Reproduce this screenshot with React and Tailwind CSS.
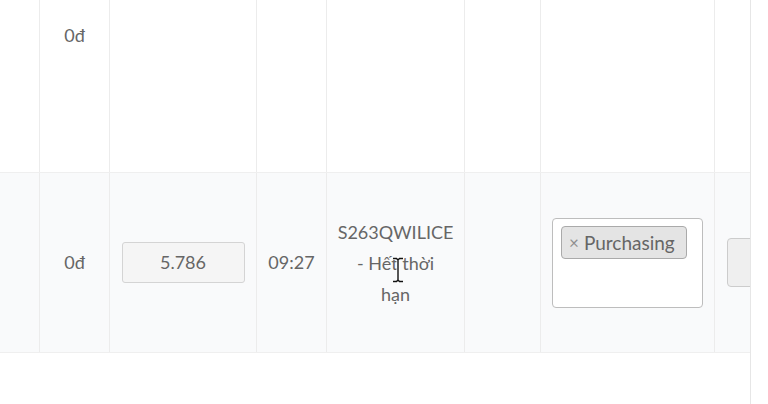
import React from 'react';

const cols = [
  'w-[40px]',
  'w-[70px]',
  'w-[147px]',
  'w-[70px]',
  'w-[138px]',
  'w-[76px]',
  'w-[174px]',
  'w-[120px]',
];

const Cell = ({ w, children, className = '' }) => (
  <div className={`${w} shrink-0 border-r border-[#ececec] flex items-center justify-center text-center ${className}`}>
    {children}
  </div>
);

const Cursor = () => (
  <svg className="absolute left-[391px] top-[257px]" width="14" height="26" viewBox="0 0 14 26">
    <path d="M2 1.5h3.5l1.5 1.5 1.5-1.5H12M7 3v20M2 24.5h3.5L7 23l1.5 1.5H12" fill="none" stroke="#fff" strokeWidth="3" />
    <path d="M2 1.5h3.5l1.5 1.5 1.5-1.5H12M7 3v20M2 24.5h3.5L7 23l1.5 1.5H12" fill="none" stroke="#111" strokeWidth="1.4" />
  </svg>
);

export default function App() {
  return (
    <div className="relative w-[768px] h-[404px] bg-white overflow-hidden text-[18px] text-[#666] font-['Lato','Noto_Sans',sans-serif]">
      <div className="w-[751px] h-full border-r border-[#e6e6e6] overflow-hidden">
        <div className="w-[900px]">
          {/* row 1 */}
          <div className="flex h-[173px] border-b border-[#efefef] bg-white">
            {cols.map((w, i) => (
              <Cell key={i} w={w} className="items-start pt-[20px]">
                {i === 1 ? <span className="leading-[31px]">0đ</span> : null}
              </Cell>
            ))}
          </div>

          {/* row 2 */}
          <div className="flex h-[180px] border-b border-[#efefef] bg-[#f9fafb]">
            <Cell w={cols[0]} />
            <Cell w={cols[1]}>
              <span className="leading-[31px]">0đ</span>
            </Cell>
            <Cell w={cols[2]}>
              <div className="w-[123px] h-[41px] bg-[#f5f5f5] border border-[#d4d4d4] rounded-[3px] flex items-center justify-center text-[#666]">
                5.786
              </div>
            </Cell>
            <Cell w={cols[3]}>
              <span className="leading-[31px]">09:27</span>
            </Cell>
            <Cell w={cols[4]}>
              <span className="leading-[31px] block pt-[1px]">
                S263QWILICE
                <br />- Hết thời
                <br />hạn
              </span>
            </Cell>
            <Cell w={cols[5]} />
            <Cell w={cols[6]} className="justify-start pl-[11px]">
              <div className="w-[151px] h-[90px] bg-white border border-[#bdbdbd] rounded-[4px] pt-[7px] pl-[8px] text-left">
                <div className="inline-flex items-center h-[33px] pl-[7px] pr-[11px] bg-[#e4e4e4] border border-[#aaaaaa] rounded-[4px] leading-none">
                  <span className="text-[17px] text-[#8f8f8f] mr-[5px]">×</span>
                  <span className="text-[19px] text-[#666]">Purchasing</span>
                </div>
              </div>
            </Cell>
            <Cell w={cols[7]} className="justify-start pl-[12px]">
              <div className="w-[80px] h-[49px] bg-[#efefef] border border-[#cccccc] rounded-[4px]" />
            </Cell>
          </div>
        </div>
      </div>
      <Cursor />
    </div>
  );
}
